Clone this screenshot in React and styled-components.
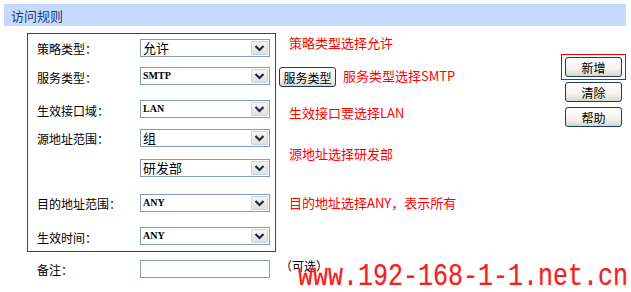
import React from 'react';
import styled, { createGlobalStyle } from 'styled-components';

const GlobalStyle = createGlobalStyle`
  html, body {
    margin: 0;
    padding: 0;
    background: #ffffff;
  }
  body {
    font-family: "Liberation Sans", "Noto Sans CJK SC", sans-serif;
    font-size: 12px;
    color: #000;
  }
`;

const cjk = `"Noto Sans CJK SC", "Liberation Sans", sans-serif`;

const StyledPage = styled.div`
  position: relative;
  width: 631px;
  height: 292px;
  padding: 4px 5px 0 4px;
  box-sizing: border-box;
  overflow: hidden;
`;

const StyledHeader = styled.div`
  height: 22px;
  background: #c6d9fd;
  padding-left: 7px;
  display: flex;
  align-items: center;
  font-family: ${cjk};
  font-size: 13px;
  color: #1f3c75;
`;

const StyledContent = styled.div`
  display: flex;
  margin-top: 7px;
`;

const StyledLeftColumn = styled.div`
  width: 249px;
  margin-left: 23px;
  flex-shrink: 0;
`;

const StyledRuleBox = styled.div`
  border: 1px solid #e60000;
  padding: 5px 0 0 9px;
  height: 219px;
  box-sizing: border-box;
`;

const StyledRow = styled.div`
  height: ${({ h }) => h}px;
`;

const StyledLine = styled.div`
  display: flex;
  align-items: center;
  height: 18px;
  white-space: nowrap;
`;

const StyledLabel = styled.span`
  width: 103px;
  flex-shrink: 0;
  font-family: ${cjk};
  font-size: 12px;
  line-height: 14px;
  margin-top: ${({ low }) => (low ? 3 : 1)}px;
`;

const StyledSelect = styled.div`
  width: 130px;
  height: 18px;
  box-sizing: border-box;
  border: 1px solid #7f9db9;
  display: flex;
  align-items: center;
  background: #fff;
  flex-shrink: 0;
`;

const StyledValue = styled.span`
  flex: 1;
  padding-left: 2px;
  font-family: ${({ latin }) => (latin ? `"Liberation Serif", serif` : cjk)};
  font-size: ${({ latin }) => (latin ? 10 : 13)}px;
  font-weight: ${({ latin }) => (latin ? 700 : 400)};
  line-height: 16px;
  color: #000;
`;

const StyledArrow = styled.span`
  width: 17px;
  height: 14px;
  margin-right: 1px;
  box-sizing: border-box;
  border: 1px solid #c3d3fd;
  border-radius: 1px;
  background: linear-gradient(#f6f6f3, #e2e0d8);
  display: flex;
  align-items: center;
  justify-content: center;
`;

const StyledInput = styled.div`
  width: 130px;
  height: 18px;
  box-sizing: border-box;
  border: 1px solid #7f9db9;
  background: #fff;
  flex-shrink: 0;
`;

const StyledMemoRow = styled.div`
  display: flex;
  align-items: center;
  margin-top: 8px;
  padding-left: 10px;
  height: 18px;
  white-space: nowrap;
`;

const StyledHint = styled.span`
  margin-left: 10px;
  font-family: ${cjk};
  font-size: 12px;
  line-height: 14px;
  margin-top: -6px;
`;

const StyledNotes = styled.div`
  display: flex;
  flex-direction: column;
  align-items: flex-start;
  margin-left: 3px;
  width: 270px;
  flex-shrink: 0;
`;

const StyledNote = styled.div`
  margin-top: ${({ gap }) => gap}px;
  padding-left: ${({ inline }) => (inline ? 0 : 10)}px;
  font-family: ${cjk};
  font-size: 13px;
  line-height: 16px;
  color: #ff0000;
  white-space: nowrap;
`;

const StyledNoteLine = styled.div`
  display: flex;
  align-items: center;
  gap: 7px;
  margin-top: ${({ gap }) => gap}px;
`;

const StyledButton = styled.div`
  width: 57px;
  height: 20px;
  box-sizing: border-box;
  border: 1px solid #1c3a66;
  border-radius: 3px;
  background: linear-gradient(#ffffff 0%, #f4f3ee 60%, #d8d6cc 100%);
  display: flex;
  align-items: center;
  justify-content: center;
  font-family: ${cjk};
  font-size: 12px;
  color: #000;
  white-space: nowrap;
`;

const StyledActions = styled.div`
  margin-left: auto;
  margin-top: 21px;
  display: flex;
  flex-direction: column;
  align-items: center;
  gap: 5px;
`;

const StyledHighlight = styled.div`
  border: 1px solid #e60000;
  padding: 2px 3px;
  margin-bottom: -3px;
`;

const StyledWatermark = styled.div`
  position: absolute;
  left: 298px;
  top: 263px;
  font-family: "Liberation Mono", monospace;
  font-size: 25px;
  line-height: 22px;
  color: #f22222;
  transform: scaleY(1.28);
  transform-origin: left top;
  white-space: nowrap;
  text-shadow: 0 0 1px rgba(255, 120, 120, 0.6);
`;

const Chevron = () => (
  <svg width="11" height="8" viewBox="0 0 11 8">
    <polyline points="1.5,2 5.5,6 9.5,2" fill="none" stroke="#1d2a4a" strokeWidth="2.2" />
  </svg>
);

const Select = ({ value, latin }) => (
  <StyledSelect>
    <StyledValue latin={latin}>{value}</StyledValue>
    <StyledArrow>
      <Chevron />
    </StyledArrow>
  </StyledSelect>
);

const rows = [
  { label: '策略类型：', value: '允许', h: 28 },
  { label: '服务类型：', value: 'SMTP', latin: true, h: 33, low: true },
  { label: '生效接口域：', value: 'LAN', latin: true, h: 29, low: true },
  { label: '源地址范围：', value: '组', h: 30 },
  { label: '', value: '研发部', h: 35 },
  { label: '目的地址范围：', value: 'ANY', latin: true, h: 33 },
  { label: '生效时间：', value: 'ANY', latin: true, h: 25, low: true },
];

const App = () => (
  <>
    <GlobalStyle />
    <StyledPage>
      <StyledHeader>访问规则</StyledHeader>
      <StyledContent>
        <StyledLeftColumn>
          <StyledRuleBox>
            {rows.map((row, i) => (
              <StyledRow key={i} h={row.h}>
                <StyledLine>
                  <StyledLabel low={row.low}>{row.label}</StyledLabel>
                  <Select value={row.value} latin={row.latin} />
                </StyledLine>
              </StyledRow>
            ))}
          </StyledRuleBox>
          <StyledMemoRow>
            <StyledLabel>备注：</StyledLabel>
            <StyledInput />
            <StyledHint>（可选）</StyledHint>
          </StyledMemoRow>
        </StyledLeftColumn>
        <StyledNotes>
          <StyledNote gap={2}>策略类型选择允许</StyledNote>
          <StyledNoteLine gap={16}>
            <StyledButton>服务类型</StyledButton>
            <StyledNote gap={-2} inline>服务类型选择SMTP</StyledNote>
          </StyledNoteLine>
          <StyledNote gap={18}>生效接口要选择LAN</StyledNote>
          <StyledNote gap={25}>源地址选择研发部</StyledNote>
          <StyledNote gap={33}>目的地址选择ANY，表示所有</StyledNote>
        </StyledNotes>
        <StyledActions>
          <StyledHighlight>
            <StyledButton>新增</StyledButton>
          </StyledHighlight>
          <StyledButton>清除</StyledButton>
          <StyledButton>帮助</StyledButton>
        </StyledActions>
      </StyledContent>
      <StyledWatermark>www.192-168-1-1.net.cn</StyledWatermark>
    </StyledPage>
  </>
);

export default App;
